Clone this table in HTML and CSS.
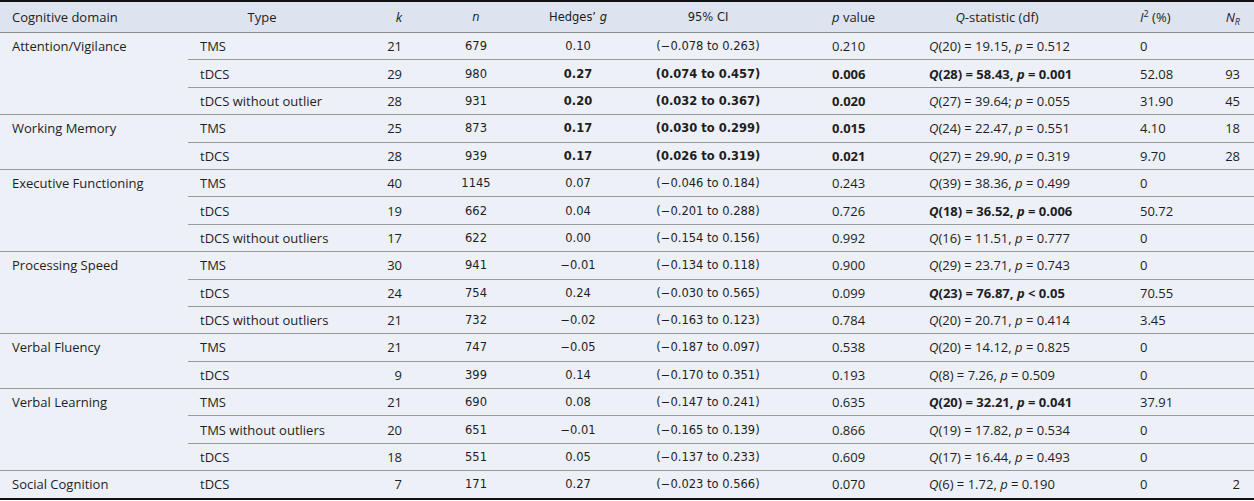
FILE: index.html
```html
<!DOCTYPE html>
<html>
<head>
<meta charset="utf-8">
<link rel="stylesheet" href="styles.css">
</head>
<body>
<table class="tbl">
  <colgroup>
    <col class="c1"><col class="c2"><col class="c3"><col class="c4"><col class="c5"><col class="c6"><col class="c7"><col class="c8"><col class="c9"><col class="c10">
  </colgroup>
  <thead>
    <tr>
      <th class="l1">Cognitive domain</th>
      <th class="cen">Type</th>
      <th class="r3"><i>k</i></th>
      <th class="cen dj"><i>n</i></th>
      <th class="cen dj">Hedges’ <i>g</i></th>
      <th class="cen dj">95% CI</th>
      <th class="l7"><i>p</i> value</th>
      <th class="cen"><i>Q</i>-statistic (df)</th>
      <th class="l9"><i>I</i><sup>2</sup> (%)</th>
      <th class="r10"><i>N<sub>R</sub></i></th>
    </tr>
  </thead>
  <tbody class="grp">
    <tr><td class="l1" rowspan="3">Attention/Vigilance</td><td class="l2">TMS</td><td class="r3">21</td><td class="cen dj">679</td><td class="cen dj">0.10</td><td class="cen dj">(−0.078 to 0.263)</td><td class="l7">0.210</td><td class="l8"><i>Q</i>(20) = 19.15, <i>p</i> = 0.512</td><td class="l9">0</td><td class="r10"></td></tr>
    <tr><td class="l2">tDCS</td><td class="r3">29</td><td class="cen dj">980</td><td class="cen dj b">0.27</td><td class="cen dj b">(0.074 to 0.457)</td><td class="l7 b">0.006</td><td class="l8 b"><i>Q</i>(28) = 58.43, <i>p</i> = 0.001</td><td class="l9">52.08</td><td class="r10">93</td></tr>
    <tr><td class="l2">tDCS without outlier</td><td class="r3">28</td><td class="cen dj">931</td><td class="cen dj b">0.20</td><td class="cen dj b">(0.032 to 0.367)</td><td class="l7 b">0.020</td><td class="l8"><i>Q</i>(27) = 39.64; <i>p</i> = 0.055</td><td class="l9">31.90</td><td class="r10">45</td></tr>
  </tbody>
  <tbody class="grp">
    <tr><td class="l1" rowspan="2">Working Memory</td><td class="l2">TMS</td><td class="r3">25</td><td class="cen dj">873</td><td class="cen dj b">0.17</td><td class="cen dj b">(0.030 to 0.299)</td><td class="l7 b">0.015</td><td class="l8"><i>Q</i>(24) = 22.47, <i>p</i> = 0.551</td><td class="l9">4.10</td><td class="r10">18</td></tr>
    <tr><td class="l2">tDCS</td><td class="r3">28</td><td class="cen dj">939</td><td class="cen dj b">0.17</td><td class="cen dj b">(0.026 to 0.319)</td><td class="l7 b">0.021</td><td class="l8"><i>Q</i>(27) = 29.90, <i>p</i> = 0.319</td><td class="l9">9.70</td><td class="r10">28</td></tr>
  </tbody>
  <tbody class="grp">
    <tr><td class="l1" rowspan="3">Executive Functioning</td><td class="l2">TMS</td><td class="r3">40</td><td class="cen dj">1145</td><td class="cen dj">0.07</td><td class="cen dj">(−0.046 to 0.184)</td><td class="l7">0.243</td><td class="l8"><i>Q</i>(39) = 38.36, <i>p</i> = 0.499</td><td class="l9">0</td><td class="r10"></td></tr>
    <tr><td class="l2">tDCS</td><td class="r3">19</td><td class="cen dj">662</td><td class="cen dj">0.04</td><td class="cen dj">(−0.201 to 0.288)</td><td class="l7">0.726</td><td class="l8 b"><i>Q</i>(18) = 36.52, <i>p</i> = 0.006</td><td class="l9">50.72</td><td class="r10"></td></tr>
    <tr><td class="l2">tDCS without outliers</td><td class="r3">17</td><td class="cen dj">622</td><td class="cen dj">0.00</td><td class="cen dj">(−0.154 to 0.156)</td><td class="l7">0.992</td><td class="l8"><i>Q</i>(16) = 11.51, <i>p</i> = 0.777</td><td class="l9">0</td><td class="r10"></td></tr>
  </tbody>
  <tbody class="grp">
    <tr><td class="l1" rowspan="3">Processing Speed</td><td class="l2">TMS</td><td class="r3">30</td><td class="cen dj">941</td><td class="cen dj">−0.01</td><td class="cen dj">(−0.134 to 0.118)</td><td class="l7">0.900</td><td class="l8"><i>Q</i>(29) = 23.71, <i>p</i> = 0.743</td><td class="l9">0</td><td class="r10"></td></tr>
    <tr><td class="l2">tDCS</td><td class="r3">24</td><td class="cen dj">754</td><td class="cen dj">0.24</td><td class="cen dj">(−0.030 to 0.565)</td><td class="l7">0.099</td><td class="l8 b"><i>Q</i>(23) = 76.87, <i>p</i> &lt; 0.05</td><td class="l9">70.55</td><td class="r10"></td></tr>
    <tr><td class="l2">tDCS without outliers</td><td class="r3">21</td><td class="cen dj">732</td><td class="cen dj">−0.02</td><td class="cen dj">(−0.163 to 0.123)</td><td class="l7">0.784</td><td class="l8"><i>Q</i>(20) = 20.71, <i>p</i> = 0.414</td><td class="l9">3.45</td><td class="r10"></td></tr>
  </tbody>
  <tbody class="grp">
    <tr><td class="l1" rowspan="2">Verbal Fluency</td><td class="l2">TMS</td><td class="r3">21</td><td class="cen dj">747</td><td class="cen dj">−0.05</td><td class="cen dj">(−0.187 to 0.097)</td><td class="l7">0.538</td><td class="l8"><i>Q</i>(20) = 14.12, <i>p</i> = 0.825</td><td class="l9">0</td><td class="r10"></td></tr>
    <tr><td class="l2">tDCS</td><td class="r3">9</td><td class="cen dj">399</td><td class="cen dj">0.14</td><td class="cen dj">(−0.170 to 0.351)</td><td class="l7">0.193</td><td class="l8"><i>Q</i>(8) = 7.26, <i>p</i> = 0.509</td><td class="l9">0</td><td class="r10"></td></tr>
  </tbody>
  <tbody class="grp">
    <tr><td class="l1" rowspan="3">Verbal Learning</td><td class="l2">TMS</td><td class="r3">21</td><td class="cen dj">690</td><td class="cen dj">0.08</td><td class="cen dj">(−0.147 to 0.241)</td><td class="l7">0.635</td><td class="l8 b"><i>Q</i>(20) = 32.21, <i>p</i> = 0.041</td><td class="l9">37.91</td><td class="r10"></td></tr>
    <tr><td class="l2">TMS without outliers</td><td class="r3">20</td><td class="cen dj">651</td><td class="cen dj">−0.01</td><td class="cen dj">(−0.165 to 0.139)</td><td class="l7">0.866</td><td class="l8"><i>Q</i>(19) = 17.82, <i>p</i> = 0.534</td><td class="l9">0</td><td class="r10"></td></tr>
    <tr><td class="l2">tDCS</td><td class="r3">18</td><td class="cen dj">551</td><td class="cen dj">0.05</td><td class="cen dj">(−0.137 to 0.233)</td><td class="l7">0.609</td><td class="l8"><i>Q</i>(17) = 16.44, <i>p</i> = 0.493</td><td class="l9">0</td><td class="r10"></td></tr>
  </tbody>
  <tbody class="grp">
    <tr><td class="l1">Social Cognition</td><td class="l2">tDCS</td><td class="r3">7</td><td class="cen dj">171</td><td class="cen dj">0.27</td><td class="cen dj">(−0.023 to 0.566)</td><td class="l7">0.070</td><td class="l8"><i>Q</i>(6) = 1.72, <i>p</i> = 0.190</td><td class="l9">0</td><td class="r10">2</td></tr>
  </tbody>
</table>
</body>
</html>
```
FILE: styles.css
```css
html, body {
  margin: 0;
  padding: 0;
  background: #ffffff;
}
.tbl {
  width: 1254px;
  border-collapse: collapse;
  table-layout: fixed;
  font-family: "Open Sans", "Noto Sans", sans-serif;
  font-size: 13px;
  color: #1e1e1e;
  background: #edf0f7;
  border-top: 2px solid #111;
  border-bottom: 2px solid #111;
}
.c1 { width: 188px; }
.c2 { width: 148px; }
.c3 { width: 76px; }
.c4 { width: 128px; }
.c5 { width: 76px; }
.c6 { width: 184px; }
.c7 { width: 96px; }
.c8 { width: 202px; }
.c9 { width: 102px; }
.c10 { width: 54px; }

thead th {
  background: #dde3ef;
  font-weight: normal;
  height: 30px;
  padding: 0;
  border-bottom: 1px solid #8c8c8c;
  white-space: nowrap;
}
td {
  height: 26.4px;
  padding: 0;
  white-space: nowrap;
  border-top: 1px solid #9a9a9a;
}
td.l1 {
  vertical-align: top;
  line-height: 26px;
}
.grp {
  border-top: 1px solid #7a7a7a;
}
.dj {
  font-family: "DejaVu Sans", "Verdana", sans-serif;
  font-size: 11.5px;
}
.l1 { text-align: left; padding-left: 12px; }
.l2 { text-align: left; padding-left: 12px; }
.r3 { text-align: right; padding-right: 10px; }
.cen { text-align: center; }
.l7 { text-align: left; padding-left: 32px; }
.l8 { text-align: left; padding-left: 33px; }
.l9 { text-align: left; padding-left: 42px; }
.r10 { text-align: right; padding-right: 14px; }
.b { font-weight: bold; }
sup { font-size: 9px; vertical-align: 5px; line-height: 0; }
sub { font-size: 9px; vertical-align: -3px; line-height: 0; }
```
